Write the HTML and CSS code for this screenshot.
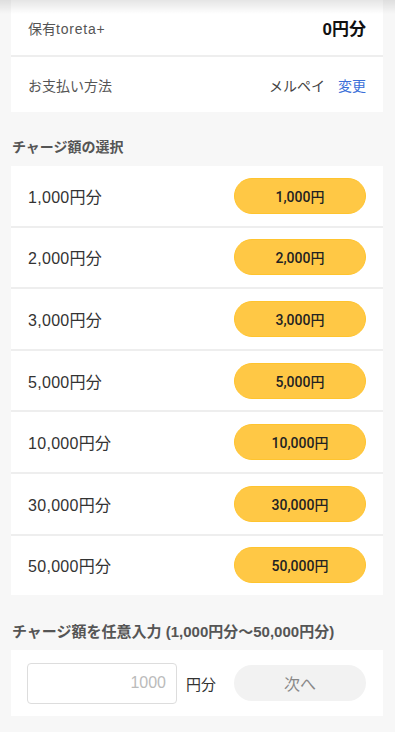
FILE: index.html
```html
<!DOCTYPE html>
<html lang="ja">
<head>
<meta charset="utf-8">
<link rel="stylesheet" href="styles.css">
</head>
<body>
<div class="shadow"></div>
<main class="page">
  <section class="card">
    <div class="row info">
      <span class="label">保有<span class="brand">toreta+</span></span>
      <span class="balance">0円分</span>
    </div>
    <div class="row info">
      <span class="label">お支払い方法</span>
      <span class="pay"><span class="method">メルペイ</span><a class="change">変更</a></span>
    </div>
  </section>

  <h2 class="heading">チャージ額の選択</h2>
  <section class="card">
    <div class="row amount"><span class="amt">1,000円分</span><button class="btn">1,000円</button></div>
    <div class="row amount"><span class="amt">2,000円分</span><button class="btn">2,000円</button></div>
    <div class="row amount"><span class="amt">3,000円分</span><button class="btn">3,000円</button></div>
    <div class="row amount"><span class="amt">5,000円分</span><button class="btn">5,000円</button></div>
    <div class="row amount"><span class="amt">10,000円分</span><button class="btn">10,000円</button></div>
    <div class="row amount"><span class="amt">30,000円分</span><button class="btn">30,000円</button></div>
    <div class="row amount"><span class="amt">50,000円分</span><button class="btn">50,000円</button></div>
  </section>

  <h2 class="heading second">チャージ額を任意入力 (1,000円分〜50,000円分)</h2>
  <section class="card custom">
    <input class="input" type="text" placeholder="1000">
    <span class="unit">円分</span>
    <button class="next">次へ</button>
  </section>
</main>
</body>
</html>
```

FILE: styles.css
```css
* { box-sizing: border-box; }
html, body {
  margin: 0;
  padding: 0;
  background: #f7f7f7;
  font-family: "Liberation Sans", "Noto Sans CJK JP", "Noto Sans", sans-serif;
  color: #333;
}
.shadow {
  position: absolute;
  top: 0;
  left: 0;
  right: 0;
  height: 14px;
  background: linear-gradient(to bottom, rgba(0,0,0,0.10), rgba(0,0,0,0));
  z-index: 2;
}
.page {
  margin: 0 12px 0 11px;
  padding-bottom: 20px;
}
.card {
  background: #fff;
}
.row {
  display: flex;
  align-items: center;
  justify-content: space-between;
  padding: 0 17px;
}
.row + .row {
  border-top: 2px solid #eeeeee;
}
.info {
  height: 55px;
}
.info + .info {
  height: 57px;
}
.label {
  font-size: 14px;
  color: #555;
}
.brand {
  letter-spacing: 0.8px;
}
.balance {
  font-size: 17px;
  font-weight: 700;
  color: #111;
}
.pay {
  display: flex;
  align-items: center;
  gap: 13px;
  font-size: 14px;
}
.method { color: #444; }
.change { color: #3a6fd8; }
.heading {
  margin: 0;
  padding: 25px 0 9px 1px;
  font-size: 14px;
  line-height: 20px;
  font-weight: 700;
  color: #555;
}
.heading.second {
  padding-top: 27px;
  padding-bottom: 8px;
  font-size: 15px;
}
.amount {
  height: 59.6px;
}
.amount + .amount {
  height: 61.6px;
}
.amt {
  font-size: 16px;
  letter-spacing: 0.3px;
  color: #333;
}
.btn {
  width: 132px;
  height: 36px;
  border: 1px solid #ffc42e;
  border-radius: 18px;
  background: #ffc845;
  font-family: Roboto, "Noto Sans CJK JP", sans-serif;
  font-size: 14px;
  font-weight: 500;
  color: #222;
  padding: 0;
}
.custom {
  display: flex;
  align-items: center;
  height: 66px;
  padding: 0 17px 0 16px;
}
.input {
  width: 150px;
  height: 41px;
  border: 1px solid #dddddd;
  border-radius: 4px;
  text-align: right;
  padding: 0 10px;
  font-family: inherit;
  font-size: 16px;
  color: #333;
  outline: none;
}
.input::placeholder { color: #bbbbbb; }
.unit {
  margin-left: 9px;
  font-size: 15px;
  color: #333;
}
.next {
  margin-left: auto;
  width: 132px;
  height: 36px;
  border: none;
  border-radius: 18px;
  background: #f2f2f2;
  font-family: inherit;
  font-size: 16px;
  color: #888;
  padding: 0;
}
```
